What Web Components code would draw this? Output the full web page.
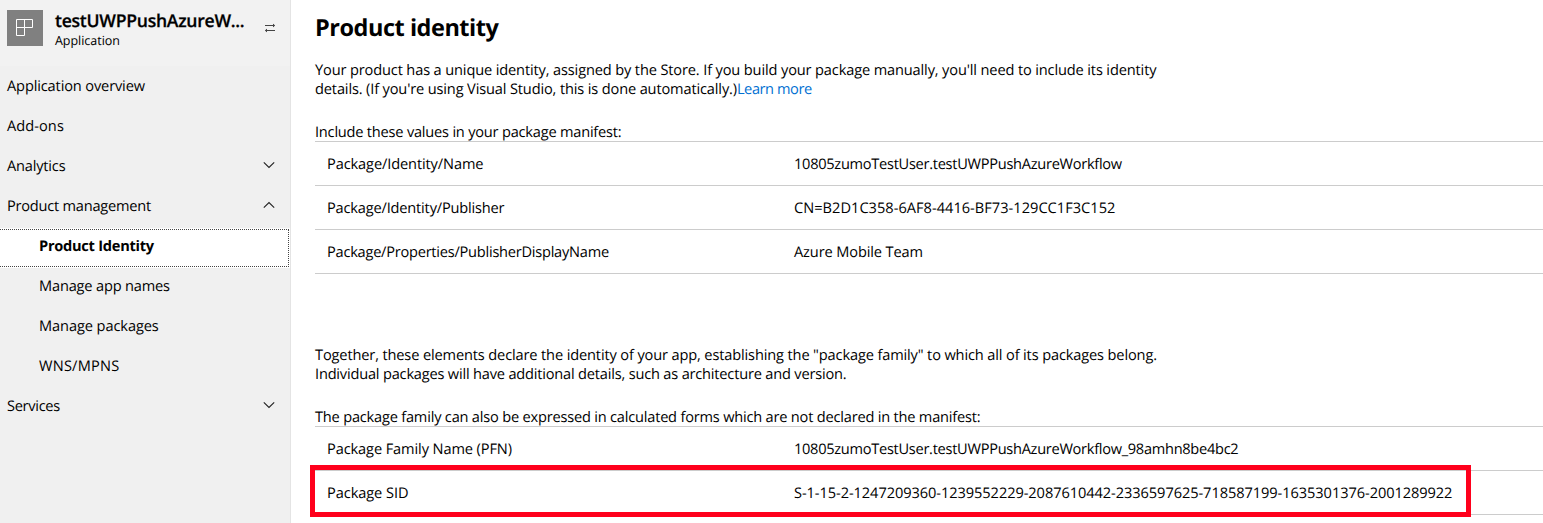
<!DOCTYPE html>
<html lang="en">
<head>
<meta charset="utf-8">
<title>Product identity</title>
<style>
html,body{margin:0;height:523px;overflow:hidden;background:#fff}
body{font:14.6px/19px "Open Sans","Noto Sans",sans-serif;color:#000;text-rendering:geometricPrecision}
</style>
</head>
<body>
<partner-page></partner-page>
<script>
const define=(name,html,ready)=>customElements.define(name,class extends HTMLElement{
  constructor(){super();this.attachShadow({mode:'open'}).innerHTML=html;}
  connectedCallback(){if(ready)ready.call(this,this.shadowRoot);}
});

/* One line of text, tracked so that it fills the measure given in "w". */
define('text-line',`<style>:host{display:block;white-space:nowrap}span{display:inline-block}</style><span><slot></slot></span>`,function(root){
  const s=root.querySelector('span'),w=+this.getAttribute('w'),n=this.textContent.length;
  if(w)s.style.letterSpacing=((w-.6-s.getBoundingClientRect().width)/n).toFixed(4)+'px';
});

define('app-header',`<style>
:host{display:flex;height:66px;box-sizing:border-box;background:#f2f2f2;padding:10px 14px 0 7px}
.tile{width:36px;height:36px;flex:none;background:#808080}
.names{margin-left:12px;flex:1}
.name{font-size:17.6px;font-weight:600;line-height:22px;-webkit-text-stroke:.25px #000}
.kind{font-size:12.5px;line-height:17px}
.swap{margin-top:12px;flex:none;width:12px;height:12px}
</style>
<svg class="tile" viewBox="0 0 36 36" fill="none" stroke="#fff" stroke-width="1"><path d="M9.5 9.5H25.5V17.5H17.5V25.5H9.5ZM17.5 9.5V17.5M9.5 17.5H17.5"/></svg>
<div class="names"><text-line class="name" w="190">testUWPPushAzureW...</text-line><text-line class="kind" w="65.5">Application</text-line></div>
<svg class="swap" viewBox="0 0 12 12" fill="none" stroke="#444" stroke-width="1"><path d="M1 3.5H10.5M9 2L10.7 3.5L9 5M11 8.5H1.5M3 7L1.3 8.5L3 10"/></svg>`);

define('nav-item',`<style>
:host{display:flex;height:40px;align-items:center;justify-content:space-between;padding:0 15px 0 7px;box-sizing:border-box}
:host([sub]){padding-left:39px}
:host([selected]){background:#fff;margin:2px 0 -2px;padding:0 1px 0 0;font-weight:700;width:290px}
.box{display:contents}
:host([selected]) .box{display:block;width:100%;height:38px;box-sizing:border-box;border:1px dotted #444;border-left:0;padding:7px 0 0 39px}
svg{display:none;width:12px;height:8px;margin-top:-2px}
:host([arrow]) svg{display:block}
:host([arrow=up]) svg{transform:scaleY(-1)}
</style><div class="box"><slot></slot><svg viewBox="0 0 12 8" fill="none" stroke="#222" stroke-width="1.1"><path d="M.8 1.3L6 6.5L11.2 1.3"/></svg></div>`);

define('side-bar',`<style>:host{display:block;width:291px;height:523px;box-sizing:border-box;flex:none;background:#f0f0f0;border-right:1px solid #e4e4e4}</style>
<app-header></app-header>
<nav-item><text-line w="138.5">Application overview</text-line></nav-item>
<nav-item><text-line w="57.5">Add-ons</text-line></nav-item>
<nav-item arrow="down"><text-line w="59">Analytics</text-line></nav-item>
<nav-item arrow="up"><text-line w="144.5">Product management</text-line></nav-item>
<nav-item selected><text-line w="115.5">Product Identity</text-line></nav-item>
<nav-item sub><text-line w="131.5">Manage app names</text-line></nav-item>
<nav-item sub><text-line w="120.3">Manage packages</text-line></nav-item>
<nav-item sub><text-line w="81">WNS/MPNS</text-line></nav-item>
<nav-item arrow="down"><text-line w="53.5">Services</text-line></nav-item>`);

define('value-row',`<style>
:host{display:grid;grid-template-columns:467px 1fr;align-items:center;height:44px;box-sizing:border-box;padding:2px 0 0 12px;border-bottom:1px solid #ccc;position:relative}
.mark{display:none}
:host([marked]) .mark{display:block;position:absolute;left:-5px;top:-6px;width:1161px;height:52px;box-sizing:border-box;border:5px solid #ff001c}
</style><slot name="label"></slot><slot></slot><div class="mark"></div>`);

define('value-table',`<style>:host{display:block;border-top:1px solid #ccc}</style><slot></slot>`);

define('product-identity',`<style>
:host{display:block;flex:1;min-width:0;padding:11px 0 0 24px;box-sizing:border-box}
h1{margin:0;font-size:23.5px;line-height:32px;font-weight:700}
.intro{margin-top:18px}
.line{display:flex}
a{color:#0070d2;text-decoration:none}
.lead{margin-top:24px;height:18px}
.declare{margin-top:72px}
</style>
<h1><text-line w="184">Product identity</text-line></h1>
<div class="intro"><text-line w="842">Your product has a unique identity, assigned by the Store. If you build your package manually, you'll need to include its identity</text-line>
<div class="line"><text-line w="422.5">details. (If you're using Visual Studio, this is done automatically.)</text-line><a href="#"><text-line w="75.5">Learn more</text-line></a></div></div>
<div class="lead"><text-line w="307">Include these values in your package manifest:</text-line></div>
<value-table>
<value-row><text-line slot="label" w="157">Package/Identity/Name</text-line><text-line w="328.5">10805zumoTestUser.testUWPPushAzureWorkflow</text-line></value-row>
<value-row><text-line slot="label" w="178">Package/Identity/Publisher</text-line><text-line w="322">CN=B2D1C358-6AF8-4416-BF73-129CC1F3C152</text-line></value-row>
<value-row><text-line slot="label" w="282.5">Package/Properties/PublisherDisplayName</text-line><text-line w="129.5">Azure Mobile Team</text-line></value-row>
</value-table>
<div class="declare"><text-line w="842.5">Together, these elements declare the identity of your app, establishing the "package family" to which all of its packages belong.</text-line>
<text-line w="532">Individual packages will have additional details, such as architecture and version.</text-line></div>
<div class="lead"><text-line w="666">The package family can also be expressed in calculated forms which are not declared in the manifest:</text-line></div>
<value-table>
<value-row><text-line slot="label" w="185.5">Package Family Name (PFN)</text-line><text-line w="445">10805zumoTestUser.testUWPPushAzureWorkflow_98amhn8be4bc2</text-line></value-row>
<value-row marked><text-line slot="label" w="82">Package SID</text-line><text-line w="659">S-1-15-2-1247209360-1239552229-2087610442-2336597625-718587199-1635301376-2001289922</text-line></value-row>
</value-table>`);

define('partner-page',`<style>:host{display:flex;width:1543px;height:523px;overflow:hidden}</style><side-bar></side-bar><product-identity></product-identity>`);
</script>
</body>
</html>
